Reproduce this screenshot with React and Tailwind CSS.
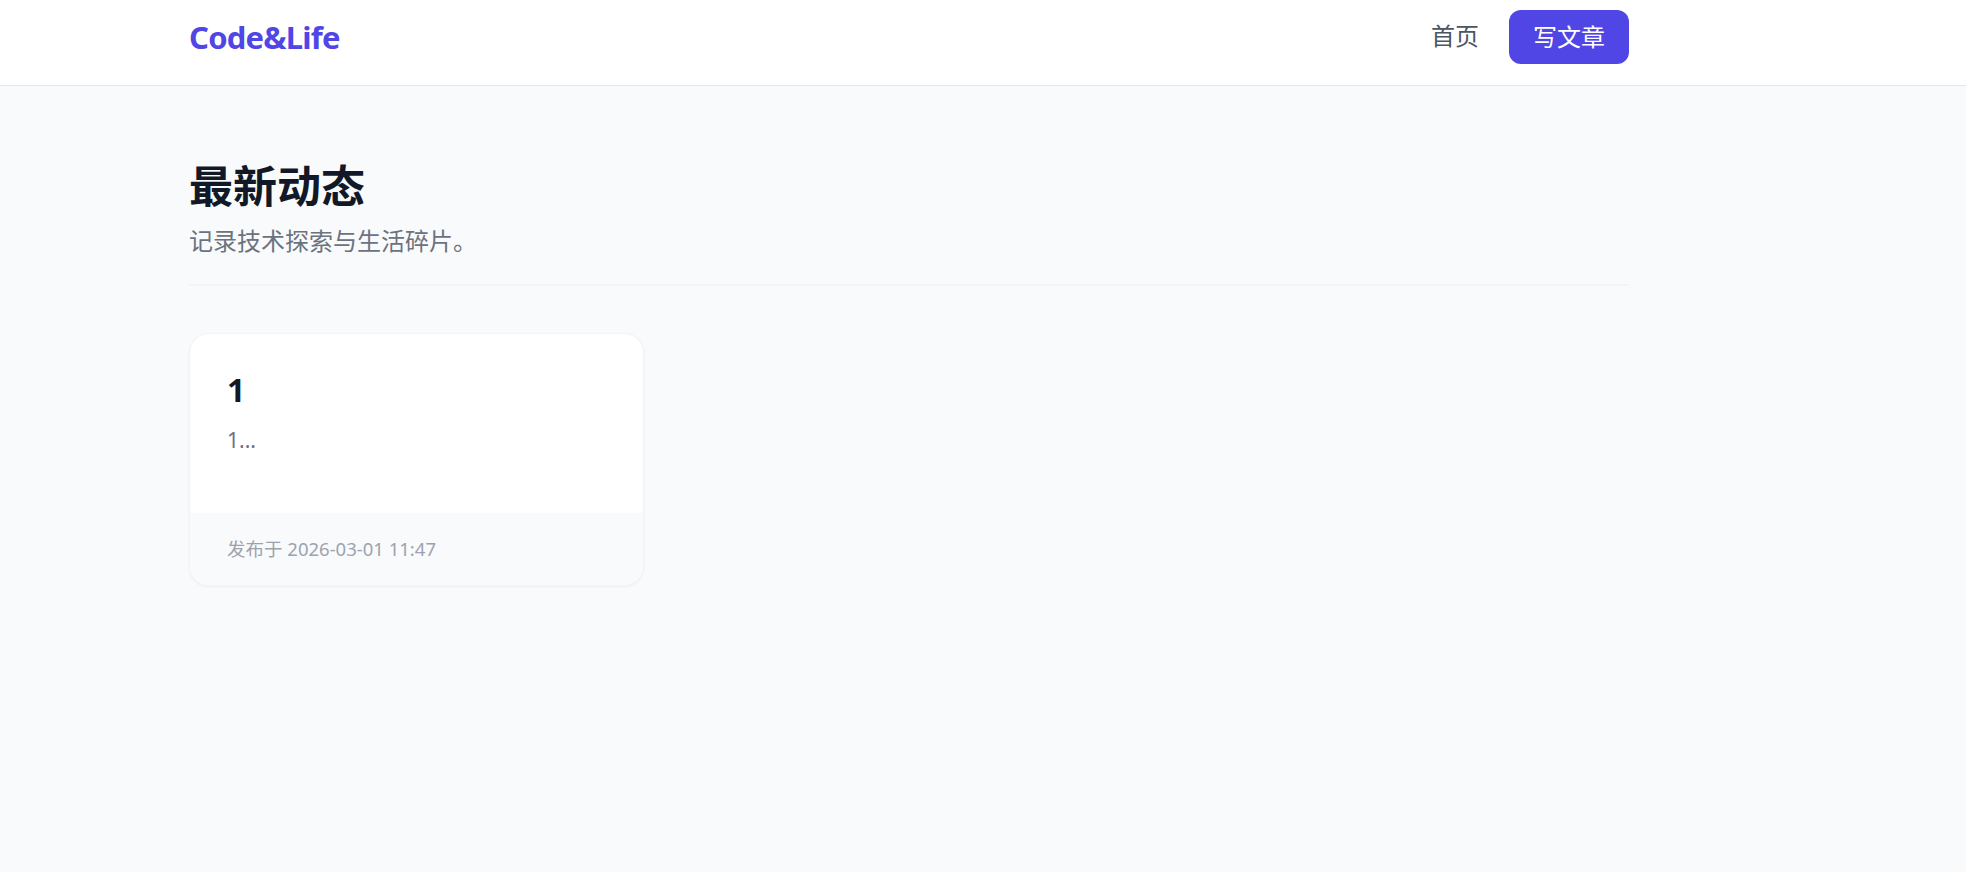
import React from 'react'

const font = { fontFamily: '"Noto Sans", "Noto Sans CJK SC", sans-serif' }

const posts = [
  { id: 1, title: '1', excerpt: '1...', date: '2026-03-01 11:47' },
]

function PostCard({ post }) {
  return (
    <div className="bg-white rounded-[20px] border border-gray-100 shadow-[0_1px_3px_rgba(0,0,0,0.05)] overflow-hidden flex flex-col h-[253px]">
      <div className="flex-1 px-[37px] pt-[36px]">
        <h2 className="text-[32px] leading-[40px] font-bold text-[#111827]">{post.title}</h2>
        <p className="mt-[15px] text-[21px] leading-[30px] text-[#6b7280]">{post.excerpt}</p>
      </div>
      <div className="h-[72px] bg-[#f9fafb] px-[37px] flex items-center">
        <span className="text-[18.5px] text-[#9ca3af]">发布于 {post.date}</span>
      </div>
    </div>
  )
}

export default function App() {
  return (
    <div className="min-h-screen bg-[#f9fafb]" style={font}>
      <header className="bg-white border-b border-gray-200 h-[86px]">
        <div className="ml-[189px] w-[1440px] h-full flex items-center justify-between">
          <a className="text-[31px] font-bold text-[#4f46e5] tracking-tight -mt-[10px]">Code&amp;Life</a>
          <nav className="flex items-center gap-[30px] -mt-[11px]">
            <a className="text-[24px] text-[#4b5563] -mt-[2px]">首页</a>
            <button className="h-[54px] px-[24px] rounded-xl bg-[#4f46e5] text-white text-[24px]">写文章</button>
          </nav>
        </div>
      </header>

      <main className="ml-[189px] w-[1440px] pt-[72px]">
        <h1 className="text-[44px] leading-[56px] font-bold text-[#111827]">最新动态</h1>
        <p className="mt-[10px] text-[24px] leading-[34px] text-[#6b7280]">记录技术探索与生活碎片。</p>
        <div className="mt-[26px] border-t-2 border-gray-100" />

        <div className="mt-[47px] grid grid-cols-3 gap-[37px]">
          {posts.map(p => <PostCard key={p.id} post={p} />)}
        </div>
      </main>
    </div>
  )
}
